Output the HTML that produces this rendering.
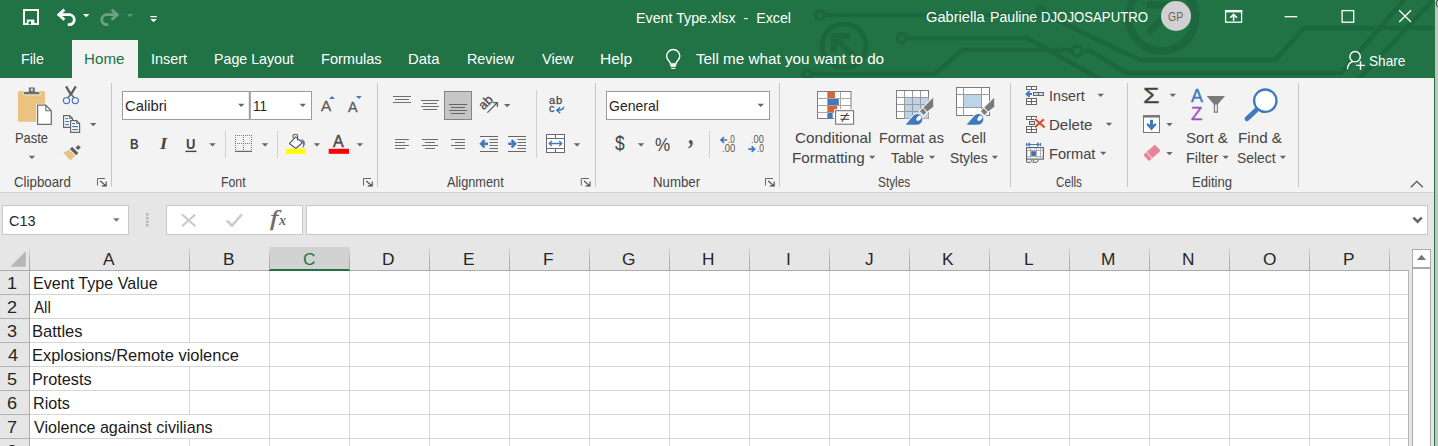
<!DOCTYPE html><html lang="en"><head><meta charset="utf-8"><title>Event Type.xlsx - Excel</title><style>
html,body{margin:0;padding:0;background:#e6e6e6;}
body{width:1438px;height:446px;overflow:hidden;position:relative;font-family:"Liberation Sans",sans-serif;}
#app{position:absolute;left:0;top:0;width:1438px;height:446px;overflow:hidden;background:#e6e6e6;}
.abs{position:absolute;}
.t{position:absolute;white-space:nowrap;line-height:1;transform-origin:0 0;}
svg.ov{position:absolute;left:0;top:0;pointer-events:none;}
#titlebar{left:0;top:0;width:1434px;height:78px;background:#217346;}
#hometab{left:72px;top:40px;width:66px;height:38px;background:#f3f3f3;}
#ribbon{left:0;top:78px;width:1434px;height:114px;background:#f3f3f3;border-bottom:1px solid #d4d4d4;}
#fbar{left:0;top:193px;width:1434px;height:54px;background:#e6e6e6;}
#grid{left:0;top:247px;width:1409px;height:199px;background:#fff;}
#colhdr{left:0;top:0;width:1409px;height:23px;background:#e6e6e6;border-bottom:1px solid #ababab;}
#rowhdr{left:0;top:24px;width:29px;height:175px;background:#e6e6e6;border-right:1px solid #ababab;}
#selcol{left:269px;top:0;width:81px;height:22px;background:#d2d2d2;border-bottom:2px solid #217346;}
.vsep{position:absolute;top:0;width:1px;height:23px;background:linear-gradient(#dcdcdc,#b4b4b4 50%,#a6a6a6);}
.rsep{position:absolute;left:0;width:29px;height:1px;background:#b2b2b2;}
.gv{position:absolute;width:1px;background:#d6d6d6;}
.gh{position:absolute;left:30px;width:1379px;height:1px;background:#d6d6d6;}
#edgeg{left:1434px;top:0;width:1px;height:446px;background:#217346;}
#edger{left:1435px;top:0;width:3px;height:446px;background:#c2c2c2;}
#vsb{left:1409px;top:247px;width:25px;height:199px;background:#e6e6e6;}
#gridr{left:1408px;top:270px;width:1px;height:176px;background:#b4b4b4;}
#sbup{left:1412px;top:249px;width:17px;height:17px;background:#fff;border:1px solid #ababab;}
#sbtr{left:1412px;top:268px;width:17px;height:180px;background:#fff;border:1px solid #ababab;}
</style></head><body><div id="app">
<div class="abs" id="titlebar"></div><div class="abs" id="hometab"></div>
<div class="abs" id="ribbon"></div><div class="abs" id="fbar"></div>
<div class="abs" id="grid"><div class="abs" id="colhdr"></div><div class="abs" id="selcol"></div><div class="abs" id="rowhdr"></div><div class="vsep" style="left:29px"></div><div class="vsep" style="left:189px"></div><div class="vsep" style="left:269px"></div><div class="vsep" style="left:349px"></div><div class="vsep" style="left:429px"></div><div class="vsep" style="left:509px"></div><div class="vsep" style="left:589px"></div><div class="vsep" style="left:669px"></div><div class="vsep" style="left:749px"></div><div class="vsep" style="left:829px"></div><div class="vsep" style="left:909px"></div><div class="vsep" style="left:989px"></div><div class="vsep" style="left:1069px"></div><div class="vsep" style="left:1149px"></div><div class="vsep" style="left:1229px"></div><div class="vsep" style="left:1309px"></div><div class="vsep" style="left:1389px"></div><div class="vsep" style="left:1469px"></div><div class="gv" style="left:189px;top:24px;height:72px"></div><div class="gv" style="left:189px;top:120px;height:48px"></div><div class="gv" style="left:189px;top:192px;height:7px"></div><div class="gv" style="left:269px;top:24px;height:175px"></div><div class="gv" style="left:349px;top:24px;height:175px"></div><div class="gv" style="left:429px;top:24px;height:175px"></div><div class="gv" style="left:509px;top:24px;height:175px"></div><div class="gv" style="left:589px;top:24px;height:175px"></div><div class="gv" style="left:669px;top:24px;height:175px"></div><div class="gv" style="left:749px;top:24px;height:175px"></div><div class="gv" style="left:829px;top:24px;height:175px"></div><div class="gv" style="left:909px;top:24px;height:175px"></div><div class="gv" style="left:989px;top:24px;height:175px"></div><div class="gv" style="left:1069px;top:24px;height:175px"></div><div class="gv" style="left:1149px;top:24px;height:175px"></div><div class="gv" style="left:1229px;top:24px;height:175px"></div><div class="gv" style="left:1309px;top:24px;height:175px"></div><div class="gv" style="left:1389px;top:24px;height:175px"></div><div class="gv" style="left:1469px;top:24px;height:175px"></div><div class="gh" style="top:47px"></div><div class="rsep" style="top:47px"></div><div class="gh" style="top:71px"></div><div class="rsep" style="top:71px"></div><div class="gh" style="top:95px"></div><div class="rsep" style="top:95px"></div><div class="gh" style="top:119px"></div><div class="rsep" style="top:119px"></div><div class="gh" style="top:143px"></div><div class="rsep" style="top:143px"></div><div class="gh" style="top:167px"></div><div class="rsep" style="top:167px"></div><div class="gh" style="top:191px"></div><div class="rsep" style="top:191px"></div></div>
<div class="abs" id="vsb"></div><div class="abs" id="gridr"></div><div class="abs" id="sbup"></div><div class="abs" id="sbtr"></div>
<div class="abs" id="edgeg"></div><div class="abs" id="edger"></div>
<svg class="ov" width="1438" height="446" viewBox="0 0 1438 446">
<defs><clipPath id="tb"><rect x="0" y="0" width="1434" height="78"/></clipPath></defs>
<g clip-path="url(#tb)"><g fill="none" stroke="#1d673e" stroke-width="4.5" stroke-linejoin="round" stroke-linecap="butt">
<circle cx="820" cy="15" r="4.5" stroke-width="3.5"/>
<path d="M825,15 H1040"/>
<circle cx="844" cy="46" r="22" stroke-width="5"/>
<path d="M856,58 L836,38 M834,52 V36 H850" stroke-width="6"/>
<circle cx="902" cy="38" r="4.5" stroke-width="3.5"/>
<path d="M907,38 H1027 L1100,79"/>
<circle cx="807" cy="74" r="4" stroke-width="3.5"/>
<path d="M811,74 H935 L962,50 H1072"/>
<circle cx="1077" cy="51" r="5" stroke-width="3.5"/>
<path d="M1082,51 H1091 L1126,73 H1341 L1404,0"/>
<circle cx="1041" cy="11" r="4" stroke-width="3.5"/>
<path d="M1044,14 L1140,60 H1275 L1304,28 H1434"/>
<path d="M1359,79 L1433,0"/>
<circle cx="1162" cy="17.5" r="33.5" stroke-width="8"/>
<path d="M1148,33 L1180,1 M1147,5 H1178" stroke-width="7"/>
</g>
<g fill="none" stroke="#fff" stroke-width="2"><rect x="24" y="10" width="14" height="14"/></g>
<rect x="26.8" y="19.6" width="7.6" height="5" fill="#fff"/><rect x="28.6" y="21.4" width="2.4" height="3" fill="#217346"/>
<g fill="none" stroke="#fff" stroke-width="2.8" stroke-linejoin="miter"><path d="M64.4,9.6 L58.8,14.7 L64.4,19.8"/><path d="M58.2,14.7 H69.3 A5,5 0 0 1 69.3,24.7 H67.8"/></g>
<path d="M83,14 h6.4 l-3.2,3.3 z" fill="#fff"/>
<g fill="none" stroke="#6da186" stroke-width="2.8"><path d="M111.6,9.6 L117.2,14.7 L111.6,19.8"/><path d="M117.8,14.7 H106.7 A5,5 0 0 0 106.7,24.7 H108.2"/></g>
<path d="M126.8,14 h6.4 l-3.2,3.3 z" fill="#5d977a"/>
<rect x="150.4" y="16" width="6.4" height="1.3" fill="#fff"/><path d="M150.4,19 h6.4 l-3.2,3.3 z" fill="#fff"/>
<g fill="none" stroke="#fff" stroke-width="1.4"><path d="M670.5,64 C670.5,61 666.6,60.3 666.6,56.1 A6.6,6.6 0 0 1 679.8,56.1 C679.8,60.3 675.9,61 675.9,64 Z"/><path d="M670.5,65.6 H675.9" stroke-width="2.4"/><path d="M671.2,68.4 H675.4" stroke-width="1.1"/></g>
<g fill="none" stroke="#fff" stroke-width="1.4"><circle cx="1355.1" cy="56.7" r="5.2"/><path d="M1347.4,69.2 C1347.8,64.6 1350.2,62.2 1353,61.5 M1356.2,65.4 H1364.9 M1360.5,61.2 V69.8"/></g>
<circle cx="1176" cy="16" r="15" fill="#d2d0d1"/>
<g fill="none" stroke="#fff" stroke-width="1.3"><rect x="1225.6" y="10.6" width="16" height="11.6"/><path d="M1225,11.2 H1242.2" stroke-width="2.4"/><path d="M1233.6,20.8 V14.4 M1230.2,17.8 L1233.6,14.4 L1237,17.8" stroke-width="1.6"/><path d="M1284.6,16.7 H1297.2"/><rect x="1342.1" y="10.6" width="11.6" height="11.6"/><path d="M1399.2,10.2 L1411,22 M1411,10.2 L1399.2,22"/></g></g>
<rect x="18" y="91" width="27" height="30.7" rx="1.5" fill="#eac282"/>
<path d="M23.3,94.8 V93.2 Q23.3,91.4 25.1,91.4 H28.4 V88.3 Q28.4,87 29.7,87 H33.9 Q35.2,87 35.2,88.3 V91.4 H38.2 Q40,91.4 40,93.2 V94.8 Z" fill="#6d6d6d" stroke="#f3f3f3" stroke-width="0.9"/>
<rect x="30.8" y="88.6" width="2" height="2.2" fill="#f3f3f3"/>
<path d="M37.6,105.2 H45.8 L51.3,110.7 V124.3 H37.6 Z" fill="#fff" stroke="#f3f3f3" stroke-width="3"/>
<path d="M37.6,105.2 H45.8 L51.3,110.7 V124.3 H37.6 Z" fill="#fff" stroke="#6e6e6e" stroke-width="1.25"/>
<path d="M45.8,105.2 V110.7 H51.3" fill="none" stroke="#6e6e6e" stroke-width="1.1"/>
<path d="M28.7,155.8 h6.4 l-3.2,3.3 z" fill="#666666"/>
<path d="M66,86.3 L71,94.6 M75.8,86.3 L70.8,94.6" stroke="#5e5e5e" stroke-width="2.3" fill="none"/>
<path d="M70.6,94 L74.4,98 M71.2,94 L67.6,98" stroke="#5e5e5e" stroke-width="1.4" fill="none"/>
<g fill="none" stroke="#4079bd" stroke-width="1.2"><circle cx="66.5" cy="100.6" r="3.1"/><circle cx="75.3" cy="100.6" r="3.1"/></g>
<g fill="#fff" stroke="#666" stroke-width="1.2"><path d="M63.6,115.6 H69.6 L72.6,118.6 V127.4 H63.6 Z"/><path d="M69.6,115.6 V118.6 H72.6" fill="none" stroke-width="1"/><path d="M70.6,120.6 H76.6 L79.6,123.6 V132.4 H70.6 Z"/><path d="M76.6,120.6 V123.6 H79.6" fill="none" stroke-width="1"/></g>
<rect x="65.2" y="118" width="2.799999999999997" height="1.2" fill="#4079bd"/><rect x="65.2" y="121" width="3.799999999999997" height="1.2" fill="#4079bd"/><rect x="65.2" y="124" width="3.799999999999997" height="1.2" fill="#4079bd"/><rect x="72.2" y="123" width="2.799999999999997" height="1.2" fill="#4079bd"/><rect x="72.2" y="126" width="5.799999999999997" height="1.2" fill="#4079bd"/><rect x="72.2" y="129" width="5.799999999999997" height="1.2" fill="#4079bd"/>
<path d="M90,123 h6.4 l-3.2,3.3 z" fill="#666666"/>
<path d="M63.2,152.4 L69.2,150.1 L75.3,155.6 L70.4,160.4 Z" fill="#eac282"/>
<path d="M70.1,148.9 L72.3,147.3 L78.1,153.1 L76.2,154.9 Z" fill="#5e5e5e" stroke="#5e5e5e" stroke-width="0.6" stroke-linejoin="round"/>
<path d="M75.7,147.7 L78.3,145.3 L80.6,147.4 L78,149.8 Z" fill="#5e5e5e" stroke="#5e5e5e" stroke-width="0.4" stroke-linejoin="round"/>
<g fill="none" stroke="#666" stroke-width="1"><path d="M97.5,185.5 V178.5 H105"/><path d="M100.2,181 L105.8,185.6 M106.2,181.6 V185.9 H101.8" stroke="#4a4a4a" stroke-width="1.1"/></g>
<rect x="122.5" y="91.5" width="189" height="28" fill="#fff" stroke="#9c9c9c"/>
<rect x="248.8" y="91" width="2" height="29" fill="#9c9c9c"/>
<path d="M238,103.8 h6.4 l-3.2,3.3 z" fill="#666666"/>
<path d="M299.6,103.8 h6.4 l-3.2,3.3 z" fill="#666666"/>
<path d="M329,99 h6 l-3,-3 z" fill="#4079bd"/><path d="M356,96 h5.8 l-2.9,3 z" fill="#4079bd"/>
<rect x="185.5" y="150.7" width="11.0" height="1.4" fill="#444"/>
<path d="M209.3,143.2 h6.4 l-3.2,3.3 z" fill="#666666"/>
<path d="M261.8,143.2 h6.4 l-3.2,3.3 z" fill="#666666"/>
<path d="M313.7,143.2 h6.4 l-3.2,3.3 z" fill="#666666"/>
<path d="M356.7,143.2 h6.4 l-3.2,3.3 z" fill="#666666"/>
<rect x="225" y="131" width="1" height="27" fill="#d0d0d0"/>
<rect x="277" y="131" width="1" height="27" fill="#d0d0d0"/>
<g fill="none" stroke="#777" stroke-width="1" stroke-dasharray="1,1" shape-rendering="crispEdges"><path d="M235,135.5 H252 M235,143.5 H252 M235.5,135 V151 M243.5,135 V151 M251.5,135 V151"/></g>
<rect x="235" y="150.8" width="17" height="1.2" fill="#6a6a6a"/>
<path d="M289.4,143.6 L295.7,136.9 L302.4,142.7 L295.8,148.5 Z" fill="#fff" stroke="#5e5e5e" stroke-width="1.2" stroke-linejoin="round"/>
<path d="M293.1,138.6 V136 Q293.1,134.3 295.3,134.3 Q297.5,134.3 297.5,136 V140.6" fill="none" stroke="#5e5e5e" stroke-width="1.1"/>
<path d="M300.6,139 Q305.8,140.4 304.8,144.6 Q304.2,147 302.3,148.2 Q303.6,145 302.9,142.4 Z" fill="#4079bd"/>
<rect x="285.8" y="148.8" width="20.2" height="5" fill="#ffff00"/>
<rect x="328.7" y="148.8" width="20.3" height="5" fill="#ff0000"/>
<g fill="none" stroke="#666" stroke-width="1"><path d="M363.5,185.5 V178.5 H371"/><path d="M366.2,181 L371.8,185.6 M372.2,181.6 V185.9 H367.8" stroke="#4a4a4a" stroke-width="1.1"/></g>
<rect x="393" y="96" width="18" height="1" fill="#6e6e6e"/>
<rect x="393" y="102" width="18" height="1" fill="#6e6e6e"/>
<rect x="395" y="99" width="14" height="1" fill="#6e6e6e"/>
<rect x="421" y="100" width="18" height="1" fill="#6e6e6e"/>
<rect x="423" y="103" width="14" height="1" fill="#6e6e6e"/>
<rect x="421" y="106" width="18" height="1" fill="#6e6e6e"/>
<rect x="423" y="109" width="14" height="1" fill="#6e6e6e"/>
<rect x="444.5" y="91.5" width="27" height="28" fill="#c6c6c6" stroke="#848484"/>
<rect x="449" y="104" width="18" height="1" fill="#666"/>
<rect x="451" y="107" width="14" height="1" fill="#666"/>
<rect x="449" y="110" width="18" height="1" fill="#666"/>
<rect x="451" y="113" width="14" height="1" fill="#666"/>
<path d="M487.4,112.6 L497.2,102.8 M493,102.6 H497.4 V107" fill="none" stroke="#5e5e5e" stroke-width="1.3"/>
<path d="M504,104 h6.4 l-3.2,3.3 z" fill="#666666"/>
<rect x="536" y="90" width="1" height="68" fill="#d0d0d0"/>
<path d="M563.6,106.6 Q563.8,110.3 557.4,110.3 M560.2,107.4 L556.8,110.3 L560.2,113.2" fill="none" stroke="#4079bd" stroke-width="1.5"/>
<rect x="395" y="139" width="14" height="1" fill="#6e6e6e"/>
<rect x="422" y="139" width="16" height="1" fill="#6e6e6e"/>
<rect x="451" y="139" width="14" height="1" fill="#6e6e6e"/>
<rect x="395" y="142" width="10" height="1" fill="#6e6e6e"/>
<rect x="425" y="142" width="10" height="1" fill="#6e6e6e"/>
<rect x="455" y="142" width="10" height="1" fill="#6e6e6e"/>
<rect x="395" y="145" width="14" height="1" fill="#6e6e6e"/>
<rect x="422" y="145" width="16" height="1" fill="#6e6e6e"/>
<rect x="451" y="145" width="14" height="1" fill="#6e6e6e"/>
<rect x="395" y="148" width="10" height="1" fill="#6e6e6e"/>
<rect x="425" y="148" width="10" height="1" fill="#6e6e6e"/>
<rect x="455" y="148" width="10" height="1" fill="#6e6e6e"/>
<rect x="480" y="136" width="18" height="1" fill="#666"/>
<rect x="480" y="151" width="18" height="1" fill="#666"/>
<rect x="508" y="136" width="18" height="1" fill="#666"/>
<rect x="508" y="151" width="18" height="1" fill="#666"/>
<rect x="489.5" y="139" width="8.5" height="1" fill="#6e6e6e"/>
<rect x="517.5" y="139" width="8.5" height="1" fill="#6e6e6e"/>
<rect x="489.5" y="142" width="8.5" height="1" fill="#6e6e6e"/>
<rect x="517.5" y="142" width="8.5" height="1" fill="#6e6e6e"/>
<rect x="489.5" y="145" width="8.5" height="1" fill="#6e6e6e"/>
<rect x="517.5" y="145" width="8.5" height="1" fill="#6e6e6e"/>
<rect x="489.5" y="148" width="8.5" height="1" fill="#6e6e6e"/>
<rect x="517.5" y="148" width="8.5" height="1" fill="#6e6e6e"/>
<path d="M488,143.8 H481.4 M484.6,140.2 L481,143.8 L484.6,147.4" fill="none" stroke="#4079bd" stroke-width="2.4"/>
<path d="M508.2,143.8 H514.8 M511.6,140.2 L515.2,143.8 L511.6,147.4" fill="none" stroke="#4079bd" stroke-width="2.4"/>
<g fill="none" stroke="#6a6a6a" stroke-width="1" shape-rendering="crispEdges"><rect x="546.5" y="134.5" width="18" height="17.5" fill="#fff"/><path d="M546.5,138.5 H564.5 M546.5,148.5 H564.5 M555.5,134.5 V138.5 M555.5,148.5 V152"/></g>
<path d="M549.3,143.5 H561.7 M551.8,141 L549.2,143.5 L551.8,146 M559.2,141 L561.8,143.5 L559.2,146" fill="none" stroke="#4079bd" stroke-width="1.3"/>
<path d="M573.8,143.2 h6.4 l-3.2,3.3 z" fill="#666666"/>
<g fill="none" stroke="#666" stroke-width="1"><path d="M581.3,185.5 V178.5 H588.8"/><path d="M584.0,181 L589.5999999999999,185.6 M590.0,181.6 V185.9 H585.5999999999999" stroke="#4a4a4a" stroke-width="1.1"/></g>
<rect x="606.5" y="91.5" width="163" height="28" fill="#fff" stroke="#9c9c9c"/>
<path d="M757.5,103.8 h6.4 l-3.2,3.3 z" fill="#666666"/>
<path d="M637.8,143.2 h6.4 l-3.2,3.3 z" fill="#666666"/>
<rect x="709" y="131" width="1" height="27" fill="#d0d0d0"/>
<path d="M727.3,140 H721 M724,137.2 L721,140 L724,142.8" fill="none" stroke="#4079bd" stroke-width="1.7"/>
<path d="M748.3,149.2 H754.6 M751.6,146.4 L754.6,149.2 L751.6,152" fill="none" stroke="#4079bd" stroke-width="1.7"/>
<g fill="none" stroke="#666" stroke-width="1"><path d="M765.5,185.5 V178.5 H773"/><path d="M768.2,181 L773.8,185.6 M774.2,181.6 V185.9 H769.8" stroke="#4a4a4a" stroke-width="1.1"/></g>
<rect x="817.5" y="91.5" width="33.5" height="27" fill="#fff" stroke="#7c7c7c"/>
<g stroke="#a6a6a6" stroke-width="1" shape-rendering="crispEdges"><path d="M827.5,92 V118 M840.5,92 V118 M818,98.5 H850.5 M818,105.5 H850.5 M818,112.5 H850.5"/></g>
<rect x="828" y="92" width="6.9" height="6" fill="#d9623b"/><rect x="828" y="99" width="10.8" height="6" fill="#4079bd"/><rect x="828" y="106" width="9.1" height="6" fill="#d9623b"/><rect x="828" y="113" width="4.7" height="5" fill="#4079bd"/>
<rect x="835.6" y="110.7" width="18" height="13.5" fill="#fff" stroke="#f3f3f3" stroke-width="3"/>
<rect x="835.6" y="110.7" width="18" height="13.5" fill="#fff" stroke="#777" stroke-width="1.1"/>
<rect x="896.5" y="90.5" width="32" height="28" fill="#fff" stroke="#7c7c7c"/>
<rect x="904.5" y="97.5" width="24" height="21" fill="#bdd3ea"/>
<g stroke="#9a9a9a" stroke-width="1" shape-rendering="crispEdges"><path d="M904.5,90.5 V118.5 M912.5,90.5 V118.5 M920.5,90.5 V118.5 M896.5,97.5 H928.5 M896.5,104.5 H928.5 M896.5,111.5 H928.5"/></g>
<g transform="translate(0 0)"><g fill="#f3f3f3" stroke="#f3f3f3" stroke-width="2" stroke-linejoin="round"><path d="M933.2,97.8 V106.8 L927.2,111.6 L923.4,107.4 Z"/><path d="M922.6,108.2 L926.4,112.4 L923.6,115.4 L919.6,111.4 Z"/><path d="M905.6,124.7 H916.5 C921.5,124.7 923.6,119.5 921.6,116.2 C919.6,113 915.6,113.4 913.4,115.8 Z"/></g><path d="M933.2,97.8 V106.8 L927.2,111.6 L923.4,107.4 Z" fill="#7a7a7a"/><path d="M922.7,108.3 L926.3,112.3 L923.7,115.1 L919.9,111.3 Z" fill="#7a7a7a"/><path d="M905.6,124.7 H916.5 C921.5,124.7 923.6,119.5 921.6,116.2 C919.6,113 915.6,113.4 913.4,115.8 Z" fill="#4079bd"/><ellipse cx="918.9" cy="118.3" rx="3.1" ry="1.9" transform="rotate(-48 918.9 118.3)" fill="#fff"/></g>
<rect x="956.5" y="87.5" width="33" height="28" fill="#fff" stroke="#7c7c7c"/>
<rect x="963.5" y="94.5" width="17.5" height="13" fill="#bdd3ea"/>
<g stroke="#9a9a9a" stroke-width="1" shape-rendering="crispEdges"><path d="M963.5,87.5 V115.5 M981.5,87.5 V115.5 M956.5,94.5 H989.5 M956.5,107.5 H989.5"/></g>
<g transform="translate(61 0)"><g fill="#f3f3f3" stroke="#f3f3f3" stroke-width="2" stroke-linejoin="round"><path d="M933.2,97.8 V106.8 L927.2,111.6 L923.4,107.4 Z"/><path d="M922.6,108.2 L926.4,112.4 L923.6,115.4 L919.6,111.4 Z"/><path d="M905.6,124.7 H916.5 C921.5,124.7 923.6,119.5 921.6,116.2 C919.6,113 915.6,113.4 913.4,115.8 Z"/></g><path d="M933.2,97.8 V106.8 L927.2,111.6 L923.4,107.4 Z" fill="#7a7a7a"/><path d="M922.7,108.3 L926.3,112.3 L923.7,115.1 L919.9,111.3 Z" fill="#7a7a7a"/><path d="M905.6,124.7 H916.5 C921.5,124.7 923.6,119.5 921.6,116.2 C919.6,113 915.6,113.4 913.4,115.8 Z" fill="#4079bd"/><ellipse cx="918.9" cy="118.3" rx="3.1" ry="1.9" transform="rotate(-48 918.9 118.3)" fill="#fff"/></g>
<path d="M869,155.8 h6.4 l-3.2,3.3 z" fill="#666666"/>
<path d="M928.8,155.8 h6.4 l-3.2,3.3 z" fill="#666666"/>
<path d="M991.7,155.8 h6.4 l-3.2,3.3 z" fill="#666666"/>
<g fill="#fff" stroke="#666" stroke-width="1" shape-rendering="crispEdges"><rect x="1026.5" y="86.5" width="10" height="3"/><path d="M1031.5,86.5 V89.5"/><rect x="1033.5" y="92.5" width="10" height="3" fill="#cde0f5"/><path d="M1038.5,92.5 V95.5"/><rect x="1026.5" y="98.5" width="10" height="6"/><path d="M1031.5,98.5 V104.5 M1026.5,101.5 H1036.5"/></g>
<path d="M1032,94 H1027 M1029.6,91.2 L1026.6,94 L1029.6,96.8" fill="none" stroke="#4079bd" stroke-width="2"/>
<g fill="#fff" stroke="#666" stroke-width="1" shape-rendering="crispEdges"><rect x="1026.5" y="116.5" width="10" height="3"/><path d="M1031.5,116.5 V119.5"/><rect x="1029.5" y="121.5" width="5" height="3" fill="#cde0f5"/><rect x="1026.5" y="126.5" width="10" height="6"/><path d="M1031.5,126.5 V132.5 M1026.5,129.5 H1036.5"/></g>
<path d="M1035,119 L1044.6,127.4 M1043.8,119.4 L1034.8,127.2" fill="none" stroke="#f3f3f3" stroke-width="3.6"/>
<path d="M1035,119 L1044.6,127.4 M1043.8,119.4 L1034.8,127.2" fill="none" stroke="#d9502a" stroke-width="2.1"/>
<path d="M1026.5,143 V146 M1040.5,143 V146 M1028,144.5 H1039 M1029.8,142.8 L1028,144.5 L1029.8,146.2 M1037.2,142.8 L1039,144.5 L1037.2,146.2" fill="none" stroke="#4079bd" stroke-width="1.2"/>
<rect x="1026.6" y="147.6" width="16.8" height="11.5" fill="#fff" stroke="#666" stroke-width="1.2"/>
<g stroke="#b0b0b0" stroke-width="1" shape-rendering="crispEdges"><path d="M1030.5,148 V159 M1036.5,148 V159 M1040.5,148 V159 M1027,150.5 H1043 M1027,156.5 H1043"/></g>
<path d="M1026.6,159 V162.3 H1030.5 L1032.2,160 M1034.2,160 L1032.8,162.3 H1037 L1038.6,160" fill="none" stroke="#666" stroke-width="1"/>
<rect x="1031.2" y="151.2" width="4.7" height="4.7" fill="#3b73b9"/>
<path d="M1097.5,93.8 h6.4 l-3.2,3.3 z" fill="#666666"/>
<path d="M1105.8,122.7 h6.4 l-3.2,3.3 z" fill="#666666"/>
<path d="M1100,151.7 h6.4 l-3.2,3.3 z" fill="#666666"/>
<path d="M1169.6,93.8 h6.4 l-3.2,3.3 z" fill="#666666"/>
<path d="M1166.3,123 h6.4 l-3.2,3.3 z" fill="#666666"/>
<path d="M1166.3,152 h6.4 l-3.2,3.3 z" fill="#666666"/>
<path d="M1222.5,155.8 h6.4 l-3.2,3.3 z" fill="#666666"/>
<path d="M1279.7,155.8 h6.4 l-3.2,3.3 z" fill="#666666"/>
<rect x="1143.5" y="115.5" width="16" height="17" fill="#fff" stroke="#787878"/>
<rect x="1143" y="115" width="17" height="2.6" fill="#7a7a7a"/>
<path d="M1150,119.8 H1153 V124.8 L1155.3,122.9 L1156.5,124.7 L1151.5,130.4 L1146.5,124.7 L1147.7,122.9 L1150,124.8 Z" fill="#4079bd"/>
<g transform="rotate(-42 1151.8 153)"><rect x="1144.2" y="148.8" width="15.6" height="8.4" rx="1.3" fill="#e8839b"/><rect x="1148" y="148.8" width="1" height="8.4" fill="#f6cdd6"/></g>
<path d="M1206.7,96 H1225 L1217.9,104.2 V112.7 H1213.8 V104.2 Z" fill="#7a7a7a"/><rect x="1215.1" y="104.6" width="1.7" height="7" fill="#f3f3f3"/>
<circle cx="1265.3" cy="100.7" r="11.2" fill="#fff" stroke="#4079bd" stroke-width="2.3"/>
<path d="M1256.4,110 L1247,118.8" stroke="#4079bd" stroke-width="4.8" stroke-linecap="round"/>
<path d="M1410.8,187.2 L1416.8,181.4 L1422.8,187.2" fill="none" stroke="#555" stroke-width="1.3"/>
<rect x="111" y="83" width="1" height="104" fill="#c6c6c6"/>
<rect x="377" y="83" width="1" height="104" fill="#c6c6c6"/>
<rect x="595" y="83" width="1" height="104" fill="#c6c6c6"/>
<rect x="779" y="83" width="1" height="104" fill="#c6c6c6"/>
<rect x="1010" y="83" width="1" height="104" fill="#c6c6c6"/>
<rect x="1127" y="83" width="1" height="104" fill="#c6c6c6"/>
<rect x="1298" y="83" width="1" height="104" fill="#c6c6c6"/>
<rect x="2.5" y="205.5" width="126" height="29" fill="#fff" stroke="#c8c8c8"/>
<path d="M113,218.2 h6.7 l-3.35,3.6 z" fill="#777"/>
<rect x="146" y="213.3" width="2.6" height="2.2" fill="#b4b4b4"/>
<rect x="146" y="216.9" width="2.6" height="2.2" fill="#b4b4b4"/>
<rect x="146" y="220.5" width="2.6" height="2.2" fill="#b4b4b4"/>
<rect x="146" y="224.1" width="2.6" height="2.2" fill="#b4b4b4"/>
<rect x="166.5" y="205.5" width="136" height="29" fill="#fff" stroke="#c8c8c8"/>
<path d="M182,214.4 L195.4,226.2 M195.2,214.6 L182,226.2" fill="none" stroke="#cbcbcb" stroke-width="2.1"/>
<path d="M226.8,220.6 L232,225.8 L241.8,214.4" fill="none" stroke="#cdcdcd" stroke-width="2.8"/>
<rect x="306.5" y="205.5" width="1121" height="29" fill="#fff" stroke="#c8c8c8"/>
<path d="M1413.4,217.6 L1417.6,221.6 L1421.8,217.6" fill="none" stroke="#666" stroke-width="2.6"/>
<text x="483.6" y="110.6" font-family="Liberation Sans, sans-serif" font-size="13" fill="#4c4c4c" stroke="#4c4c4c" stroke-width="0.3" transform="rotate(-45 483.6 110.6)">ab</text>
<path d="M25.8,251.3 V266.7 H10.3 Z" fill="#b6b6b6"/>
<path d="M1417,260 h9 l-4.5,-5.2 z" fill="#777"/>
<circle cx="1441.5" cy="3.5" r="5.2" fill="#c9c8c9" stroke="#3a3a3a" stroke-width="1"/>
</svg>
<span class="t" style="left:636.40px;top:10.30px;font-size:15px;color:#ffffff;white-space:pre;transform:scaleX(0.9501);">Event Type.xlsx  -  Excel</span>
<span class="t" style="left:926.33px;top:8.56px;font-size:15.4px;color:#ffffff;white-space:pre;transform:scaleX(0.9521);">Gabriella </span>
<span class="t" style="left:989.94px;top:8.56px;font-size:15.4px;color:#ffffff;white-space:pre;transform:scaleX(0.9190);">Pauline </span>
<span class="t" style="left:1041.32px;top:8.56px;font-size:15.4px;color:#ffffff;transform:scaleX(0.8571);">DJOJOSAPUTRO</span>
<span class="t" style="left:1168.32px;top:10.62px;font-size:12.5px;color:#6f5f5b;transform:scaleX(0.8358);">GP</span>
<span class="t" style="left:21.30px;top:51.30px;font-size:15px;color:#ffffff;transform:scaleX(0.9465);">File</span>
<span class="t" style="left:83.66px;top:51.30px;font-size:15px;color:#217346;transform:scaleX(1.0109);">Home</span>
<span class="t" style="left:150.84px;top:51.30px;font-size:15px;color:#ffffff;transform:scaleX(0.9583);">Insert</span>
<span class="t" style="left:214.40px;top:51.30px;font-size:15px;color:#ffffff;transform:scaleX(0.9475);">Page Layout</span>
<span class="t" style="left:321.26px;top:51.30px;font-size:15px;color:#ffffff;transform:scaleX(0.9700);">Formulas</span>
<span class="t" style="left:408.01px;top:51.30px;font-size:15px;color:#ffffff;transform:scaleX(0.9907);">Data</span>
<span class="t" style="left:467.39px;top:51.30px;font-size:15px;color:#ffffff;transform:scaleX(0.9561);">Review</span>
<span class="t" style="left:541.97px;top:51.30px;font-size:15px;color:#ffffff;transform:scaleX(0.9665);">View</span>
<span class="t" style="left:599.97px;top:51.30px;font-size:15px;color:#ffffff;transform:scaleX(1.0405);">Help</span>
<span class="t" style="left:696.49px;top:51.30px;font-size:15px;color:#ffffff;transform:scaleX(1.0162);">Tell me what you want to do</span>
<span class="t" style="left:1368.97px;top:53.30px;font-size:15px;color:#ffffff;transform:scaleX(0.9077);">Share</span>
<span class="t" style="left:14.70px;top:129.90px;font-size:15px;color:#444444;transform:scaleX(0.8605);">Paste</span>
<span class="t" style="left:14.22px;top:174.10px;font-size:15px;color:#444444;transform:scaleX(0.8859);">Clipboard</span>
<span class="t" style="left:125.42px;top:97.80px;font-size:15px;color:#262626;transform:scaleX(0.9844);">Calibri</span>
<span class="t" style="left:253.18px;top:97.80px;font-size:15px;color:#262626;transform:scaleX(0.9000);">11</span>
<span class="t" style="left:130.13px;top:135.88px;font-size:15.5px;color:#444444;font-weight:bold;transform:scaleX(0.7674);">B</span>
<span class="t" style="left:159.67px;top:135.66px;font-size:16px;color:#444444;font-weight:bold;font-style:italic;font-family:'Liberation Serif',serif;transform:scaleX(1.1406);">I</span>
<span class="t" style="left:186.19px;top:135.80px;font-size:15px;color:#444444;font-weight:bold;transform:scaleX(0.8671);">U</span>
<span class="t" style="left:221.10px;top:174.10px;font-size:15px;color:#444444;transform:scaleX(0.8208);">Font</span>
<span class="t" style="left:447.12px;top:174.10px;font-size:15px;color:#444444;transform:scaleX(0.8503);">Alignment</span>
<span class="t" style="left:609.37px;top:97.80px;font-size:15px;color:#262626;transform:scaleX(0.9348);">General</span>
<span class="t" style="left:614.94px;top:134.19px;font-size:19.5px;color:#444444;transform:scaleX(0.8904);">$</span>
<span class="t" style="left:654.69px;top:135.05px;font-size:19.2px;color:#444444;transform:scaleX(0.8885);">%</span>
<span class="t" style="left:652.89px;top:174.10px;font-size:15px;color:#444444;transform:scaleX(0.8832);">Number</span>
<span class="t" style="left:795.19px;top:129.90px;font-size:15px;color:#444444;transform:scaleX(1.0175);">Conditional</span>
<span class="t" style="left:792.21px;top:149.70px;font-size:15px;color:#444444;transform:scaleX(1.0126);">Formatting</span>
<span class="t" style="left:879.45px;top:129.90px;font-size:15px;color:#444444;transform:scaleX(0.9603);">Format as</span>
<span class="t" style="left:891.06px;top:149.70px;font-size:15px;color:#444444;transform:scaleX(0.9220);">Table</span>
<span class="t" style="left:961.34px;top:129.90px;font-size:15px;color:#444444;transform:scaleX(0.9641);">Cell</span>
<span class="t" style="left:949.96px;top:149.70px;font-size:15px;color:#444444;transform:scaleX(0.9239);">Styles</span>
<span class="t" style="left:878.12px;top:174.10px;font-size:15px;color:#444444;transform:scaleX(0.7891);">Styles</span>
<span class="t" style="left:1048.56px;top:87.80px;font-size:15px;color:#444444;transform:scaleX(0.9495);">Insert</span>
<span class="t" style="left:1049.08px;top:116.60px;font-size:15px;color:#444444;transform:scaleX(1.0028);">Delete</span>
<span class="t" style="left:1049.17px;top:146.00px;font-size:15px;color:#444444;transform:scaleX(0.9761);">Format</span>
<span class="t" style="left:1055.62px;top:174.10px;font-size:15px;color:#444444;transform:scaleX(0.7781);">Cells</span>
<span class="t" style="left:1185.76px;top:129.90px;font-size:15px;color:#444444;transform:scaleX(1.0018);">Sort &amp;</span>
<span class="t" style="left:1185.59px;top:149.70px;font-size:15px;color:#444444;transform:scaleX(0.9661);">Filter</span>
<span class="t" style="left:1238.43px;top:129.90px;font-size:15px;color:#444444;transform:scaleX(1.0142);">Find &amp;</span>
<span class="t" style="left:1236.59px;top:149.70px;font-size:15px;color:#444444;transform:scaleX(0.9263);">Select</span>
<span class="t" style="left:1191.64px;top:174.10px;font-size:15px;color:#444444;transform:scaleX(0.8735);">Editing</span>
<span class="t" style="left:9.03px;top:213.00px;font-size:15px;color:#262626;transform:scaleX(0.9632);">C13</span>
<span class="t" style="left:270.14px;top:207.51px;font-size:20.5px;color:#6a6a6a;-webkit-text-stroke:0.35px #6a6a6a;font-style:italic;font-family:'Liberation Serif',serif;transform:scaleX(1.3897);">f</span>
<span class="t" style="left:279.26px;top:213.63px;font-size:14px;color:#6a6a6a;font-weight:bold;font-style:italic;font-family:'Liberation Serif',serif;transform:scaleX(1.0024);">x</span>
<span class="t" style="left:321.08px;top:97.86px;font-size:15.4px;color:#5a5a5a;-webkit-text-stroke:0.3px #5a5a5a;transform:scaleX(0.9903);">A</span>
<span class="t" style="left:348.08px;top:99.98px;font-size:14.2px;color:#5a5a5a;-webkit-text-stroke:0.3px #5a5a5a;transform:scaleX(1.0111);">A</span>
<span class="t" style="left:333.48px;top:133.44px;font-size:17.2px;color:#4c4c4c;-webkit-text-stroke:0.5px #4c4c4c;transform:scaleX(0.9290);">A</span>
<span class="t" style="left:549.04px;top:94.67px;font-size:11.5px;color:#444;letter-spacing:0.8px;-webkit-text-stroke:0.25px #444;transform:scaleX(0.9747);">ab</span>
<span class="t" style="left:549.03px;top:103.07px;font-size:11.5px;color:#444;-webkit-text-stroke:0.25px #444;transform:scaleX(0.9421);">c</span>
<span class="t" style="left:728.24px;top:134.57px;font-size:10.2px;color:#555;transform:scaleX(0.7894);">.0</span>
<span class="t" style="left:721.71px;top:143.57px;font-size:10.2px;color:#555;transform:scaleX(0.9296);">.00</span>
<span class="t" style="left:750.72px;top:134.57px;font-size:10.2px;color:#555;transform:scaleX(0.9018);">.00</span>
<span class="t" style="left:756.60px;top:143.57px;font-size:10.2px;color:#555;transform:scaleX(0.8336);">.0</span>
<span class="t" style="left:840.07px;top:110.45px;font-size:14px;color:#444;transform:scaleX(1.2925);">≠</span>
<span class="t" style="left:1143.34px;top:84.54px;font-size:22.4px;color:#444;-webkit-text-stroke:0.3px #444;transform:scaleX(1.1904);">Σ</span>
<span class="t" style="left:1191.15px;top:88.40px;font-size:17.6px;color:#4079bd;-webkit-text-stroke:0.4px #4079bd;transform:scaleX(1.0166);">A</span>
<span class="t" style="left:1191.13px;top:104.56px;font-size:18.6px;color:#9a52c2;-webkit-text-stroke:0.4px #9a52c2;transform:scaleX(1.0063);">Z</span>
<span class="t" style="left:688.07px;top:121.26px;font-size:28px;color:#555;font-weight:bold;font-family:'Liberation Serif',serif;transform:scaleX(0.7796);">,</span>
<span class="t" style="left:103.00px;top:251.96px;font-size:16px;color:#262626;transform:scaleX(1.0800);">A</span>
<span class="t" style="left:223.25px;top:251.96px;font-size:16px;color:#262626;transform:scaleX(1.0800);">B</span>
<span class="t" style="left:302.59px;top:251.96px;font-size:16px;color:#217346;transform:scaleX(1.0800);">C</span>
<span class="t" style="left:382.19px;top:251.96px;font-size:16px;color:#262626;transform:scaleX(1.0800);">D</span>
<span class="t" style="left:462.91px;top:251.96px;font-size:16px;color:#262626;transform:scaleX(1.0800);">E</span>
<span class="t" style="left:543.40px;top:251.96px;font-size:16px;color:#262626;transform:scaleX(1.0800);">F</span>
<span class="t" style="left:622.21px;top:251.96px;font-size:16px;color:#262626;transform:scaleX(1.0800);">G</span>
<span class="t" style="left:702.20px;top:251.96px;font-size:16px;color:#262626;transform:scaleX(1.0800);">H</span>
<span class="t" style="left:786.36px;top:251.96px;font-size:16px;color:#262626;transform:scaleX(1.0800);">I</span>
<span class="t" style="left:865.49px;top:251.96px;font-size:16px;color:#262626;transform:scaleX(1.0800);">J</span>
<span class="t" style="left:942.33px;top:251.96px;font-size:16px;color:#262626;transform:scaleX(1.0800);">K</span>
<span class="t" style="left:1024.08px;top:251.96px;font-size:16px;color:#262626;transform:scaleX(1.0800);">L</span>
<span class="t" style="left:1101.39px;top:251.96px;font-size:16px;color:#262626;transform:scaleX(1.0800);">M</span>
<span class="t" style="left:1182.20px;top:251.96px;font-size:16px;color:#262626;transform:scaleX(1.0800);">N</span>
<span class="t" style="left:1262.52px;top:251.96px;font-size:16px;color:#262626;transform:scaleX(1.0800);">O</span>
<span class="t" style="left:1343.23px;top:251.96px;font-size:16px;color:#262626;transform:scaleX(1.0800);">P</span>
<span class="t" style="left:7.35px;top:275.89px;font-size:15.6px;color:#262626;transform:scaleX(1.1600);">1</span>
<span class="t" style="left:7.41px;top:299.89px;font-size:15.6px;color:#262626;transform:scaleX(1.1600);">2</span>
<span class="t" style="left:7.32px;top:323.89px;font-size:15.6px;color:#262626;transform:scaleX(1.1600);">3</span>
<span class="t" style="left:7.60px;top:347.89px;font-size:15.6px;color:#262626;transform:scaleX(1.1600);">4</span>
<span class="t" style="left:7.08px;top:371.89px;font-size:15.6px;color:#262626;transform:scaleX(1.1600);">5</span>
<span class="t" style="left:7.28px;top:395.89px;font-size:15.6px;color:#262626;transform:scaleX(1.1600);">6</span>
<span class="t" style="left:7.37px;top:419.89px;font-size:15.6px;color:#262626;transform:scaleX(1.1600);">7</span>
<span class="t" style="left:7.40px;top:443.89px;font-size:15.6px;color:#262626;transform:scaleX(1.1600);">8</span>
<span class="t" style="left:32.53px;top:275.81px;font-size:15.7px;color:#1a1a1a;transform:scaleX(1.0258);">Event Type Value</span>
<span class="t" style="left:33.79px;top:299.81px;font-size:15.7px;color:#1a1a1a;transform:scaleX(0.9599);">All</span>
<span class="t" style="left:32.40px;top:323.81px;font-size:15.7px;color:#1a1a1a;transform:scaleX(1.0543);">Battles</span>
<span class="t" style="left:32.44px;top:347.81px;font-size:15.7px;color:#1a1a1a;transform:scaleX(1.0494);">Explosions/Remote violence</span>
<span class="t" style="left:32.49px;top:371.81px;font-size:15.7px;color:#1a1a1a;transform:scaleX(1.0356);">Protests</span>
<span class="t" style="left:32.51px;top:395.81px;font-size:15.7px;color:#1a1a1a;transform:scaleX(1.0270);">Riots</span>
<span class="t" style="left:33.73px;top:419.81px;font-size:15.7px;color:#1a1a1a;transform:scaleX(1.0259);">Violence against civilians</span>
</div></body></html>
